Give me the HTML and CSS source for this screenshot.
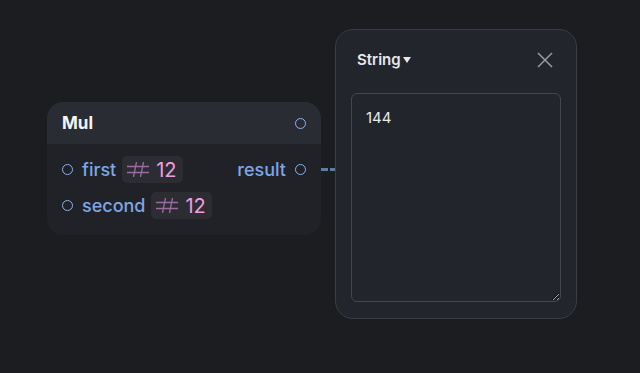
FILE: index.html
```html
<!DOCTYPE html>
<html lang="en">
<head>
    <meta charset="UTF-8">
    <meta name="viewport" content="width=device-width, initial-scale=1.0">
    <title>Mul node</title>
    <link rel="stylesheet" href="styles.css">
</head>
<body>
    <div class="canvas">
        <div class="node">
            <div class="node-header">
                <span class="node-title">Mul</span>
                <span class="port"></span>
            </div>
            <div class="node-body">
                <div class="row">
                    <span class="port"></span>
                    <span class="label">first</span>
                    <span class="badge">
                        <svg class="hash" viewBox="0 0 22 15"><line x1="0" y1="4.5" x2="22" y2="4.5"/><line x1="0" y1="10.5" x2="22" y2="10.5"/><line x1="9.5" y1="0" x2="6.5" y2="15"/><line x1="16.5" y1="0" x2="13.5" y2="15"/></svg>
                        <span class="num">12</span>
                    </span>
                    <span class="spacer"></span>
                    <span class="label">result</span>
                    <span class="port"></span>
                </div>
                <div class="row">
                    <span class="port"></span>
                    <span class="label">second</span>
                    <span class="badge">
                        <svg class="hash" viewBox="0 0 22 15"><line x1="0" y1="4.5" x2="22" y2="4.5"/><line x1="0" y1="10.5" x2="22" y2="10.5"/><line x1="9.5" y1="0" x2="6.5" y2="15"/><line x1="16.5" y1="0" x2="13.5" y2="15"/></svg>
                        <span class="num">12</span>
                    </span>
                </div>
            </div>
        </div>

        <div class="edge"></div>

        <div class="popup">
            <div class="popup-header">
                <span class="type-select">String<span class="caret"></span></span>
                <svg class="close" viewBox="0 0 24 24"><line x1="5" y1="5" x2="19" y2="19"/><line x1="19" y1="5" x2="5" y2="19"/></svg>
            </div>
            <textarea class="value">144</textarea>
        </div>
    </div>
</body>
</html>
```

FILE: styles.css
```css
body {
    margin: 0;
    background-color: #1b1d21;
    font-family: Inter, "Noto Sans", sans-serif;
    color: #e8eaee;
}
.canvas {
    position: relative;
    width: 640px;
    height: 373px;
    overflow: hidden;
}
.node {
    position: absolute;
    left: 47px;
    top: 102px;
    width: 274px;
    height: 133px;
    border-radius: 16px;
    background-color: #202227;
    overflow: hidden;
}
.node-header {
    height: 42px;
    display: flex;
    align-items: center;
    justify-content: space-between;
    padding: 0 15px 0 15px;
    background-color: #292c33;
}
.node-title {
    font-size: 17px;
    font-weight: 700;
    color: #f4f5f7;
}
.port {
    width: 9px;
    height: 9px;
    border: 1.8px solid #8db3ee;
    border-radius: 50%;
    flex-shrink: 0;
}
.node-body {
    padding: 12px 15px 0 15px;
    display: flex;
    flex-direction: column;
    gap: 9px;
}
.row {
    display: flex;
    align-items: center;
    height: 27px;
}
.row .port {
    margin-right: 9px;
}
.row .label + .port {
    margin-right: 0;
    margin-left: 9px;
}
.label {
    font-size: 18px;
    font-weight: 500;
    color: #7fa6e6;
}
.badge {
    display: flex;
    align-items: center;
    height: 27px;
    margin-left: 6px;
    padding: 0 6px 0 5px;
    border-radius: 5px;
    background-color: #2b2d33;
}
.hash {
    width: 22px;
    height: 15px;
    stroke: #9a6c9f;
    stroke-width: 1.3;
    fill: none;
    margin-right: 7px;
}
.num {
    font-size: 20px;
    color: #ee9fe0;
}
.spacer {
    flex: 1;
}
.edge {
    position: absolute;
    left: 321px;
    top: 168px;
    width: 15px;
    height: 3px;
    background: repeating-linear-gradient(90deg, #5e7d9f 0 7px, transparent 7px 9px);
}
.popup {
    position: absolute;
    left: 335px;
    top: 29px;
    width: 242px;
    height: 290px;
    box-sizing: border-box;
    border: 1px solid #3a3d43;
    border-radius: 18px;
    background-color: #22252b;
    display: flex;
    flex-direction: column;
    padding: 0 15px 16px 15px;
}
.popup-header {
    height: 63px;
    display: flex;
    align-items: center;
    justify-content: space-between;
    padding: 0 4px 4px 6px;
    box-sizing: border-box;
}
.type-select {
    display: flex;
    align-items: center;
    font-size: 15px;
    font-weight: 600;
    color: #e6e8ec;
}
.caret {
    width: 0;
    height: 0;
    margin-left: 2px;
    border-left: 4px solid transparent;
    border-right: 4px solid transparent;
    border-top: 6px solid #e6e8ec;
}
.close {
    width: 24px;
    height: 24px;
    stroke: #9a9da3;
    stroke-width: 1.5;
}
.value {
    flex: 1;
    margin: 0;
    padding: 14px 14px;
    border: 1px solid #44474d;
    border-radius: 6px;
    background-color: #22252b;
    color: #e8eaee;
    font-family: Inter, "Noto Sans", sans-serif;
    font-size: 15px;
    resize: both;
    outline: none;
}
```
